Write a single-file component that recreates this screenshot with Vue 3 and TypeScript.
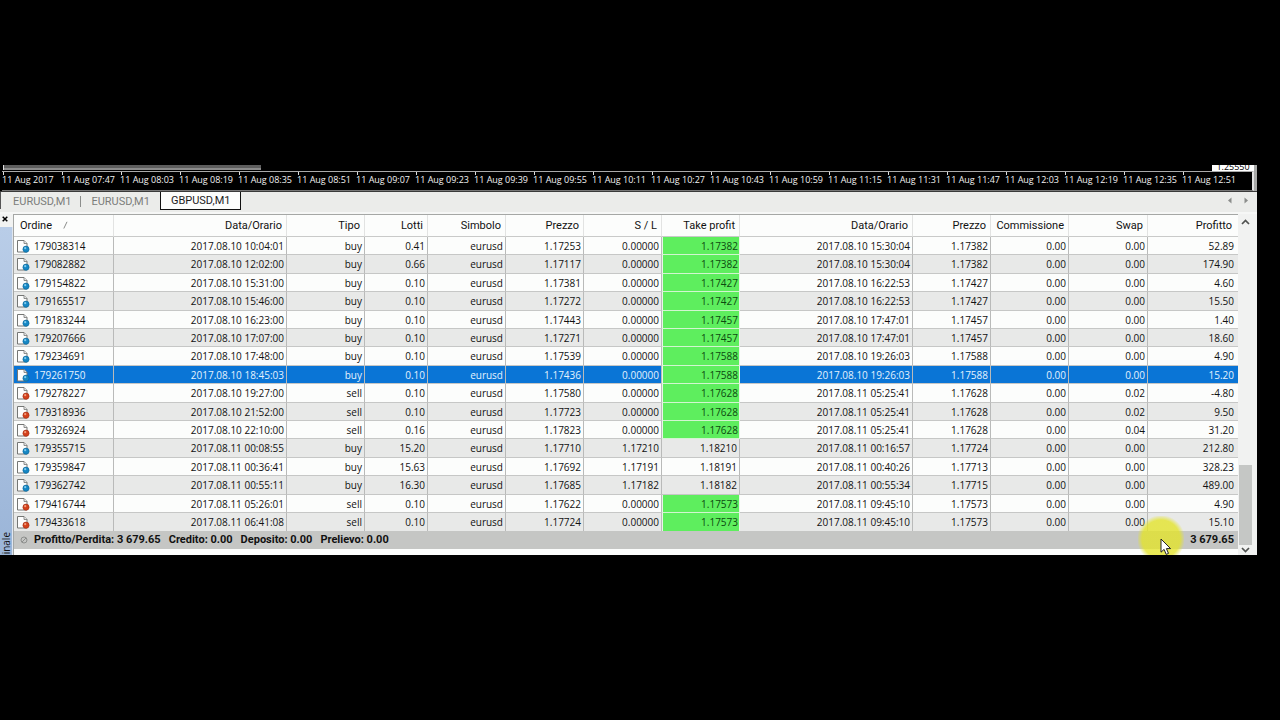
<script setup lang="ts">
import { ref } from 'vue'

interface Order {
  id: string
  opened: string
  side: 'buy' | 'sell'
  lots: string
  open: string
  sl: string
  tp: string
  closed: string
  close: string
  swap: string
  profit: string
}

const raw = `179038314|2017.08.10 10:04:01|buy|0.41|1.17253|0.00000|1.17382|2017.08.10 15:30:04|1.17382|0.00|52.89
179082882|2017.08.10 12:02:00|buy|0.66|1.17117|0.00000|1.17382|2017.08.10 15:30:04|1.17382|0.00|174.90
179154822|2017.08.10 15:31:00|buy|0.10|1.17381|0.00000|1.17427|2017.08.10 16:22:53|1.17427|0.00|4.60
179165517|2017.08.10 15:46:00|buy|0.10|1.17272|0.00000|1.17427|2017.08.10 16:22:53|1.17427|0.00|15.50
179183244|2017.08.10 16:23:00|buy|0.10|1.17443|0.00000|1.17457|2017.08.10 17:47:01|1.17457|0.00|1.40
179207666|2017.08.10 17:07:00|buy|0.10|1.17271|0.00000|1.17457|2017.08.10 17:47:01|1.17457|0.00|18.60
179234691|2017.08.10 17:48:00|buy|0.10|1.17539|0.00000|1.17588|2017.08.10 19:26:03|1.17588|0.00|4.90
179261750|2017.08.10 18:45:03|buy|0.10|1.17436|0.00000|1.17588|2017.08.10 19:26:03|1.17588|0.00|15.20
179278227|2017.08.10 19:27:00|sell|0.10|1.17580|0.00000|1.17628|2017.08.11 05:25:41|1.17628|0.02|-4.80
179318936|2017.08.10 21:52:00|sell|0.10|1.17723|0.00000|1.17628|2017.08.11 05:25:41|1.17628|0.02|9.50
179326924|2017.08.10 22:10:00|sell|0.16|1.17823|0.00000|1.17628|2017.08.11 05:25:41|1.17628|0.04|31.20
179355715|2017.08.11 00:08:55|buy|15.20|1.17710|1.17210|1.18210|2017.08.11 00:16:57|1.17724|0.00|212.80
179359847|2017.08.11 00:36:41|buy|15.63|1.17692|1.17191|1.18191|2017.08.11 00:40:26|1.17713|0.00|328.23
179362742|2017.08.11 00:55:11|buy|16.30|1.17685|1.17182|1.18182|2017.08.11 00:55:34|1.17715|0.00|489.00
179416744|2017.08.11 05:26:01|sell|0.10|1.17622|0.00000|1.17573|2017.08.11 09:45:10|1.17573|0.00|4.90
179433618|2017.08.11 06:41:08|sell|0.10|1.17724|0.00000|1.17573|2017.08.11 09:45:10|1.17573|0.00|15.10`

const orders: Order[] = raw.split('\n').map((line) => {
  const [id, opened, side, lots, open, sl, tp, closed, close, swap, profit] = line.split('|')
  return { id, opened, side: side as Order['side'], lots, open, sl, tp, closed, close, swap, profit }
})

const headers = ['Data/Orario', 'Tipo', 'Lotti', 'Simbolo', 'Prezzo', 'S / L', 'Take profit', 'Data/Orario', 'Prezzo', 'Commissione', 'Swap', 'Profitto']

const times = ['2017', '07:47', '08:03', '08:19', '08:35', '08:51', '09:07', '09:23', '09:39', '09:55', '10:11', '10:27', '10:43', '10:59', '11:15', '11:31', '11:47', '12:03', '12:19', '12:35', '12:51']

const tabs = ['EURUSD,M1', 'EURUSD,M1', 'GBPUSD,M1']
const activeTab = ref(2)
const selected = ref('179261750')
</script>

<template>
  <main class="screen">
    <div class="terminal">
      <section class="chart">
        <div class="chart-top">
          <span class="chart-scroll"></span>
          <span class="price"><span class="price-text">1.25550</span></span>
        </div>
        <div class="axis">
          <span v-for="t in times" :key="t" class="tick">11 Aug {{ t }}</span>
        </div>
      </section>

      <nav class="tabs">
        <button
          v-for="(t, i) in tabs"
          :key="i"
          type="button"
          class="tab"
          :class="{ active: i === activeTab }"
          @click="activeTab = i"
        >{{ t }}</button>
        <span class="tab-arrows">
          <button type="button" class="arrow" aria-label="Precedente">
            <svg width="5" height="7" viewBox="0 0 5 7"><path d="M4.5 0.5v6L1 3.5z" fill="#8b8d8b" /></svg>
          </button>
          <button type="button" class="arrow" aria-label="Successivo">
            <svg width="5" height="7" viewBox="0 0 5 7"><path d="M0.5 0.5v6L4 3.5z" fill="#8b8d8b" /></svg>
          </button>
        </span>
      </nav>

      <div class="panel">
        <aside class="dock">
          <button type="button" class="close" aria-label="Chiudi">
            <svg width="6" height="6" viewBox="0 0 6 6"><path d="M0.7 0.7l4.6 4.6M5.3 0.7L0.7 5.3" stroke="#000" stroke-width="1.5" /></svg>
          </button>
          <div class="dock-bar"><span class="dock-label">inale</span></div>
        </aside>

        <div class="list">
          <table class="orders">
            <colgroup>
              <col class="c-order" /><col /><col class="c-mid" /><col class="c-lots" /><col class="c-mid" />
              <col class="c-mid" /><col class="c-mid" /><col class="c-mid" /><col /><col class="c-mid" />
              <col class="c-mid" /><col class="c-swap" /><col class="c-profit" />
            </colgroup>
            <thead>
              <tr>
                <th class="first">
                  Ordine
                  <svg class="sort" width="5" height="8" viewBox="0 0 5 8"><path d="M0.8 7.5L4 0.8" stroke="#8a8c8a" stroke-width="1" fill="none" /></svg>
                </th>
                <th v-for="(h, i) in headers" :key="i">{{ h }}</th>
              </tr>
            </thead>
            <tbody>
              <tr v-for="o in orders" :key="o.id" :class="{ selected: o.id === selected }" @click="selected = o.id">
                <td class="first">
                  <span class="order">
                    <svg class="doc" width="14" height="14" viewBox="0 0 14 14">
                      <path d="M1.5 1.5h6.5l3 3v8.5H1.5z" fill="#fdfdfd" stroke="#747674" stroke-width="1" />
                      <path d="M8 1.5V4.5h3" fill="#e8e8e8" stroke="#747674" stroke-width="0.8" />
                      <circle cx="10" cy="10.2" r="3.1" :fill="o.side === 'buy' ? '#1687c4' : '#d3401c'" :stroke="o.side === 'buy' ? '#0d6697' : '#a12f14'" stroke-width="0.6" />
                      <circle cx="9.2" cy="9.2" r="1.1" :fill="o.side === 'buy' ? '#7fcbee' : '#f29a78'" />
                    </svg>
                    {{ o.id }}
                  </span>
                </td>
                <td>{{ o.opened }}</td>
                <td>{{ o.side }}</td>
                <td>{{ o.lots }}</td>
                <td>eurusd</td>
                <td>{{ o.open }}</td>
                <td>{{ o.sl }}</td>
                <td :class="{ hit: o.sl === '0.00000' }">{{ o.tp }}</td>
                <td>{{ o.closed }}</td>
                <td>{{ o.close }}</td>
                <td>0.00</td>
                <td>{{ o.swap }}</td>
                <td>{{ o.profit }}</td>
              </tr>
            </tbody>
          </table>
          <footer class="summary">
            <svg class="nil" width="8" height="8" viewBox="0 0 8 8"><circle cx="4" cy="4" r="3" fill="none" stroke="#8d8f8d" /><path d="M2 6l4-4" stroke="#8d8f8d" /></svg>
            <span class="totals">
              <span>Profitto/Perdita: 3 679.65</span>
              <span>Credito: 0.00</span>
              <span>Deposito: 0.00</span>
              <span>Prelievo: 0.00</span>
            </span>
            <span class="total">3 679.65</span>
          </footer>
        </div>

        <div class="scrollbar">
          <button type="button" class="scroll-btn" aria-label="Su">
            <svg width="9" height="6" viewBox="0 0 9 6"><path d="M1 5l3.5-3.5L8 5" fill="none" stroke="#505250" stroke-width="1.7" /></svg>
          </button>
          <div class="track"><div class="thumb"></div></div>
          <button type="button" class="scroll-btn down" aria-label="Giù">
            <svg width="9" height="6" viewBox="0 0 9 6"><path d="M1 1l3.5 3.5L8 1" fill="none" stroke="#505250" stroke-width="1.7" /></svg>
          </button>
        </div>

        <div class="pointer">
          <svg width="12" height="18" viewBox="0 0 12 18"><path d="M1 1v13.2l3.1-2.8 2.1 5 2.3-1-2.1-4.8h4.2z" fill="#fff" stroke="#222" stroke-width="1" /></svg>
        </div>
      </div>
    </div>
  </main>
</template>

<style>
body {
  margin: 0;
  background: #000;
}
</style>

<style scoped>
.screen {
  min-height: 100vh;
  display: flex;
  align-items: center;
  overflow: hidden;
  background: #000;
  font-family: "Open Sans", "Noto Sans", sans-serif;
  font-size: 10px;
  color: #111;
}
.screen * {
  box-sizing: border-box;
}
button {
  margin: 0;
  padding: 0;
  border: 0;
  background: none;
  font: inherit;
  color: inherit;
}
svg {
  display: block;
  flex: none;
}
.terminal {
  flex: 1;
  min-width: 0;
  margin-right: 23px;
  background: #fcfdfc;
}
.chart {
  background: #000;
  border-right: 3px solid #a8a9a8;
}
.chart-top {
  display: flex;
  justify-content: space-between;
  align-items: flex-start;
  height: 6px;
  padding-left: 3px;
}
.chart-scroll {
  width: 258px;
  height: 5px;
  background: linear-gradient(#5e5e5e 60%, #8c8c8c 60%);
  border-left: 1px solid #ddd;
}
.price {
  width: 42px;
  height: 6px;
  padding-bottom: 1px;
  overflow: hidden;
  display: flex;
  align-items: flex-end;
  justify-content: center;
  background: #fff;
  color: #000;
}
.price-text {
  font-size: 9px;
  line-height: 7px;
}
.axis {
  display: flex;
  height: 20px;
  margin-left: 2px;
  border-top: 1px solid #aaa;
  border-right: 2px solid #e4e4e4;
  border-bottom: 1px solid #777;
  font-size: 9px;
  line-height: 16px;
  color: #f2f2f2;
}
.tick {
  width: 59px;
  white-space: nowrap;
  background: linear-gradient(#ddd, #ddd) 1px 0 / 1px 3px no-repeat;
}
.tabs {
  display: flex;
  height: 21px;
  border-top: 1px solid #3a3a3a;
  background: linear-gradient(#555, #555) 0 0 / 1px 17px no-repeat #ebecea;
  font-family: Roboto, sans-serif;
  font-size: 11px;
  line-height: 17px;
}
.tab {
  height: 18px;
  padding: 0 10px;
  color: #7b7d7b;
  background: linear-gradient(#8c8e8c, #8c8e8c) right 4px / 1px 11px no-repeat;
}
.tab:first-child {
  padding-left: 13px;
}
.tab:nth-child(2) {
  background: none;
}
.tab.active {
  border: 1px solid #111;
  border-top: 0;
  background: #fcfdfc;
  color: #1c1c1c;
}
.tab-arrows {
  display: flex;
  gap: 12px;
  margin-left: auto;
  padding: 0 8px 4px 0;
  align-items: center;
}
.panel {
  position: relative;
  display: flex;
  border-top: 2px solid #f6f7f6;
}
.dock {
  width: 13px;
  display: flex;
  flex-direction: column;
  background: #f2f3f2;
}
.close {
  height: 13px;
  padding: 0 0 3px 2px;
}
.dock-bar {
  flex: 1;
  display: flex;
  align-items: flex-end;
  padding-bottom: 1px;
  background: linear-gradient(#b9cde8, #9bb5d8);
  border-right: 1px solid #dfe6ef;
}
.dock-label {
  writing-mode: vertical-rl;
  transform: rotate(180deg);
  font-size: 10px;
  line-height: 12px;
}
.list {
  flex: 1;
  min-width: 0;
  border-top: 1px solid #a5a7a5;
  border-left: 1px solid #a5a7a5;
  padding-bottom: 6px;
}
.orders {
  width: 100%;
  table-layout: fixed;
  border-collapse: separate;
  border-spacing: 0;
}
.c-order { width: 100px; }
.c-mid { width: 78px; }
.c-lots { width: 63px; }
.c-swap { width: 79px; }
.c-profit { width: 90px; }
th {
  height: 22px;
  padding: 0 4px 0 0;
  border-right: 1px solid #e2e3e2;
  border-bottom: 1px solid #c9cac9;
  font-family: Roboto, sans-serif;
  font-size: 11px;
  font-weight: 400;
  line-height: 20px;
  text-align: right;
  white-space: nowrap;
}
th.first {
  padding-left: 6px;
  text-align: left;
}
.sort {
  display: inline-block;
  margin-left: 8px;
}
td {
  height: 18px;
  padding: 0 2px 0 0;
  border-right: 1px solid #b9bab9;
  border-bottom: 1px solid #c6c7c6;
  line-height: 16px;
  text-align: right;
  white-space: nowrap;
}
tr:nth-child(5n + 2) td,
tr:nth-child(5n + 4) td {
  height: 19px;
}
tbody tr:nth-child(even) {
  background: #e8e9e8;
}
tbody tr.selected {
  background: #0a75d6;
  color: #e4f2fd;
}
th:last-child {
  padding-right: 6px;
  border-right: 0;
}
td:last-child {
  padding-right: 4px;
  border-right: 0;
}
tbody tr:last-child td {
  border-bottom: 0;
}
td.first {
  padding-left: 2px;
  text-align: left;
}
.order {
  display: flex;
  align-items: center;
  gap: 4px;
}
td.hit {
  padding-right: 1px;
  background: #5eee5e;
  border-left: 1px solid #e8f5e8;
  border-right-color: #e8f5e8;
  border-bottom-color: #d2f5d0;
  color: #0c4a10;
}
.summary {
  display: flex;
  align-items: center;
  height: 18px;
  padding: 0 4px 0 6px;
  background: #c5c6c4;
  font-family: Roboto, sans-serif;
  font-size: 11px;
  font-weight: 700;
  line-height: 18px;
}
.totals {
  display: flex;
  gap: 8px;
  margin-left: 6px;
  white-space: nowrap;
}
.total {
  margin-left: auto;
}
.scrollbar {
  width: 19px;
  display: flex;
  flex-direction: column;
  padding-right: 4px;
  background: #f1f2f1;
}
.scroll-btn {
  height: 16px;
  display: flex;
  align-items: center;
  justify-content: center;
}
.scroll-btn.down {
  height: 10px;
}
.track {
  flex: 1;
  display: flex;
  flex-direction: column;
  justify-content: flex-end;
}
.thumb {
  height: 80px;
  margin: 0 1px;
  background: #c5c7c5;
}
.pointer {
  position: absolute;
  right: 73px;
  bottom: -7px;
  width: 46px;
  height: 46px;
  padding: 22px 0 0 22px;
  clip-path: inset(0 0 7px 0);
  background: radial-gradient(circle, rgba(228, 228, 40, 0.78) 19px, rgba(228, 228, 40, 0) 24px);
}
</style>
